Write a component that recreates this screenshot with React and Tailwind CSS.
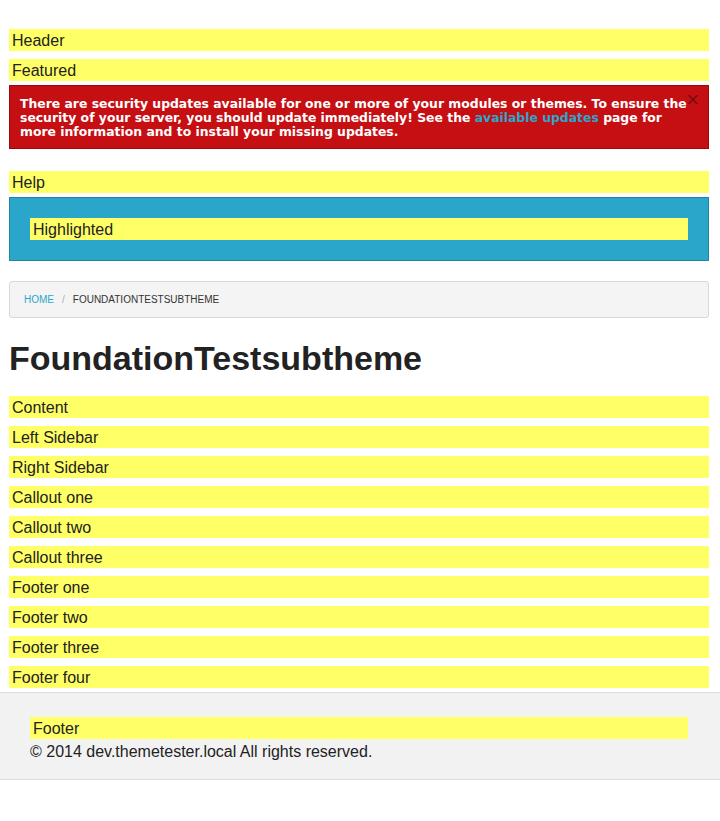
export default function App() {
  const bar = "h-[22px] bg-[#ffff66] pl-[3px] text-[16px] leading-[24px] text-[#222222]";
  const regions = [
    "Content",
    "Left Sidebar",
    "Right Sidebar",
    "Callout one",
    "Callout two",
    "Callout three",
    "Footer one",
    "Footer two",
    "Footer three",
    "Footer four",
  ];
  return (
    <div className="min-h-[821px] bg-white font-['Liberation_Sans',Arial,sans-serif] text-[#222222]">
      <div className="pt-[29px] ml-[9px] w-[700px]">
        <div className={bar}>Header</div>
        <div className={bar + " mt-[8px]"}>Featured</div>
        <div className="relative mt-[4px] h-[64px] border border-[#970b0e] bg-[#c60f13] pl-[10px] pr-[8px] pt-[11px] text-[12.4px] leading-[14px] font-bold text-white font-['DejaVu_Sans',Verdana,sans-serif]">
          <p>
            There are security updates available for one or more of your modules or themes. To ensure the security of your server, you should update immediately! See the{" "}
            <span className="text-[#2ba6cb]">available updates</span> page for more information and to install your missing updates.
          </p>
          <span className="absolute right-[9px] top-[3px] text-[22px] leading-[22px] font-normal text-[#7a0b0e] font-['Liberation_Sans',Arial,sans-serif]">×</span>
        </div>
        <div className={bar + " mt-[22px]"}>Help</div>
        <div className="mt-[4px] border border-[#2284a1] bg-[#2ba6cb] p-[20px]">
          <div className={bar}>Highlighted</div>
        </div>
        <div className="mt-[20px] flex h-[37px] items-center rounded-[3px] border border-[#d8d8d8] bg-[#f4f4f4] px-[14px] text-[10px] uppercase">
          <span className="text-[#2ba6cb]">Home</span>
          <span className="mx-[8px] text-[#aaaaaa]">/</span>
          <span className="text-[#333333]">FoundationTestsubtheme</span>
        </div>
        <h1 className="mt-[20px] mb-[18px] text-[34px] leading-[40px] font-bold text-[#222222]">FoundationTestsubtheme</h1>
        <div className="flex flex-col gap-[8px]">
          {regions.map((r) => (
            <div key={r} className={bar}>{r}</div>
          ))}
        </div>
      </div>
      <div className="mt-[4px] border-y border-[#dcdcdc] bg-[#f2f2f2] pt-[24px] pb-[15px]">
        <div className="ml-[30px] w-[658px]">
          <div className={bar}>Footer</div>
          <div className="pt-[1px] text-[16px] leading-[24px] text-[#222222]">© 2014 dev.themetester.local All rights reserved.</div>
        </div>
      </div>
    </div>
  );
}
